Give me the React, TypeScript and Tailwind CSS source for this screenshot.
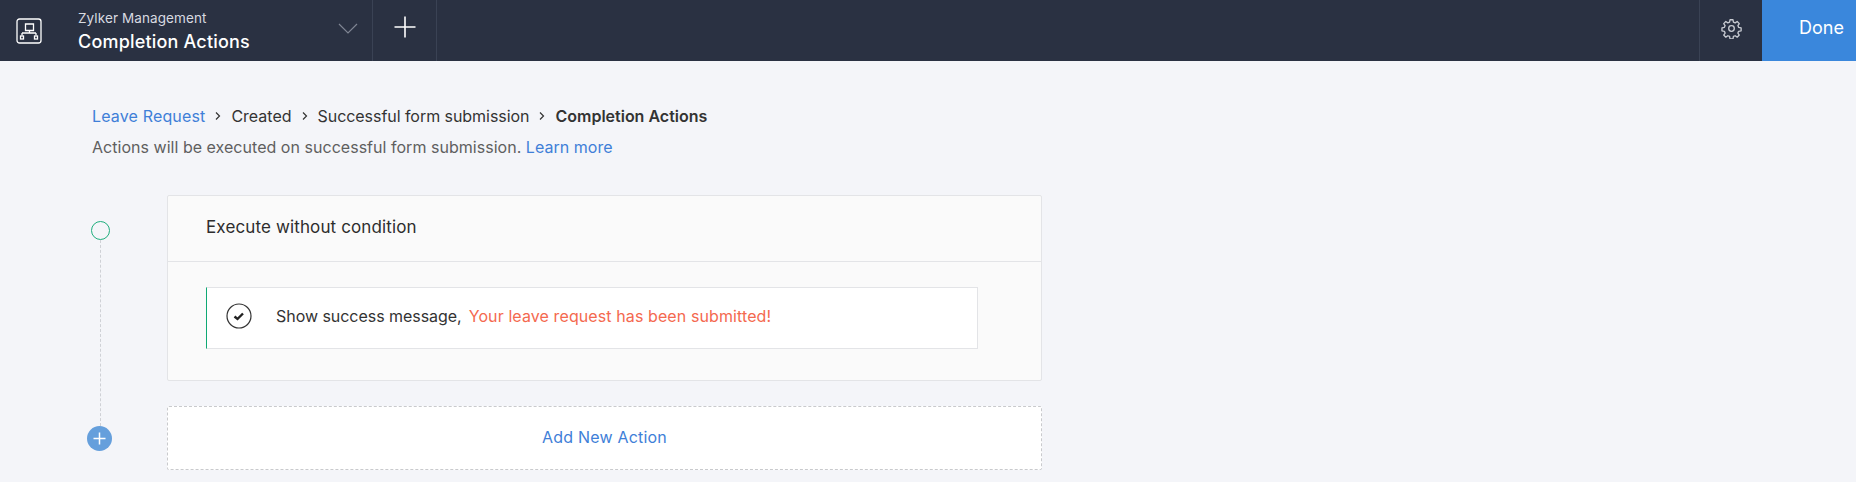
const font = "font-['Inter','Liberation_Sans',sans-serif]";

function Chevron() {
  return (
    <svg width="8" height="12" viewBox="0 0 8 12" className="mx-[9px] shrink-0" fill="none" stroke="#333" strokeWidth="1.2">
      <path d="M2 2.5 L5.5 6 L2 9.5" />
    </svg>
  );
}

export default function App() {
  return (
    <div className={`${font} h-[482px] w-[1856px] overflow-hidden bg-[#f4f5f9]`}>
      <header className="flex h-[61px] items-stretch bg-[#2a3142]">
        <div className="flex w-[57px] shrink-0 items-center justify-center">
          <svg width="26" height="26" viewBox="0 0 26 26" fill="none" stroke="#fff" strokeWidth="1.3">
            <rect x="1" y="1" width="24" height="24" rx="2.5" />
            <path d="M9.5 6h8v6.5h-8z" />
            <path d="M6 15h14M13.5 12.5v2.5M6 15v2.5M20 15v2.5" />
            <rect x="4.5" y="18" width="3" height="3" />
            <rect x="18.5" y="18" width="3" height="3" />
          </svg>
        </div>
        <div className="flex w-[316px] shrink-0 items-center justify-between border-r border-[#3a4254] pr-[14px] pl-[21px]">
          <div className="flex flex-col pt-[7px]">
            <span className="text-[13.5px] leading-[16px] tracking-[0.1px] text-[#d8dae0]">Zylker Management</span>
            <span className="text-[18px] leading-[32px] font-medium tracking-[0.19px] text-white">Completion Actions</span>
          </div>
          <svg width="20" height="11" viewBox="0 0 20 11" fill="none" stroke="#7f8593" strokeWidth="1.2" className="mb-[5px]">
            <path d="M1 1 L10 10 L19 1" />
          </svg>
        </div>
        <div className="flex w-[64px] shrink-0 items-center justify-center border-r border-[#3a4254] pb-[8px]">
          <svg width="22" height="22" viewBox="0 0 22 22" stroke="#fff" strokeWidth="1.6">
            <path d="M11 0.5v21M0.5 11h21" />
          </svg>
        </div>
        <div className="flex-1" />
        <div className="flex w-[63px] shrink-0 items-center justify-center border-l border-[#3a4254] pb-[4px]">
          <svg width="21" height="21" viewBox="0 0 24 24" fill="none" stroke="#c9ccd3" strokeWidth="1.5" strokeLinejoin="round">
            <path d="M10.3 2h3.4l.5 2.8 2 .8 2.3-1.6 2.4 2.4-1.6 2.3.8 2 2.9.6v3.4l-2.9.5-.8 2 1.6 2.3-2.4 2.4-2.3-1.6-2 .8-.5 2.9h-3.4l-.5-2.9-2-.8-2.3 1.6-2.4-2.4 1.6-2.3-.8-2-2.8-.5v-3.4l2.8-.6.8-2-1.6-2.3 2.4-2.4 2.3 1.6 2-.8z" />
            <circle cx="12" cy="12" r="3.2" />
          </svg>
        </div>
        <button className="flex w-[94px] shrink-0 items-center justify-start bg-[#3a87dc] pb-[6px] pl-[37px] text-[18px] text-white">Done</button>
      </header>

      <main className="pl-[92px]">
        <nav className="mt-[45px] flex h-[20px] items-center text-[16px] text-[#333]">
          <span className="tracking-[0.15px] text-[#3f7fd8]">Leave Request</span>
          <Chevron />
          <span>Created</span>
          <Chevron />
          <span className="tracking-[-0.05px]">Successful form submission</span>
          <Chevron />
          <span className="font-semibold">Completion Actions</span>
        </nav>
        <p className="mt-[11px] h-[20px] text-[16px] leading-[20px] tracking-[0.03px] text-[#5f5f5f]">
          Actions will be executed on successful form submission. <span className="text-[#3f7fd8]">Learn more</span>
        </p>

        <div className="mt-[38px] flex">
          <div className="flex w-[75px] shrink-0 flex-col items-start pt-[26px]">
            <div className="ml-[-1px] h-[19px] w-[19px] shrink-0 rounded-full border border-[#1fae7d]" />
            <div className="ml-[8px] h-[186px] border-l border-dashed border-[#cfd1d6]" />
            <div className="ml-[-5px] flex h-[25px] w-[25px] shrink-0 items-center justify-center rounded-full bg-[#659fdc]">
              <svg width="13" height="13" viewBox="0 0 13 13" stroke="#fff" strokeWidth="1.5">
                <path d="M6.5 0.5v12M0.5 6.5h12" />
              </svg>
            </div>
          </div>

          <div className="w-[875px] shrink-0">
            <section className="h-[186px] rounded-[2px] border border-[#e3e4e7] bg-[#fafafa]">
              <div className="flex h-[66px] items-center border-b border-[#e3e4e7] pb-[2px] pl-[38px] text-[17px] tracking-[0.13px] text-[#2d2d2d]">
                Execute without condition
              </div>
              <div className="pt-[25px] pl-[38px]">
                <div className="flex h-[62px] w-[772px] items-center border border-[#e3e4e7] border-l-[#0fa974] bg-white pb-[4px] pl-[19px] text-[16px]">
                  <svg width="26" height="26" viewBox="0 0 26 26" fill="none" className="shrink-0">
                    <circle cx="13" cy="13" r="12" stroke="#333" strokeWidth="1.2" />
                    <path d="M8.5 13.5 L11.5 16 L17 10.5" stroke="#222" strokeWidth="2.4" />
                  </svg>
                  <span className="ml-[24px] tracking-[-0.04px] text-[#333]">Show success message,</span>
                  <span className="ml-[7px] tracking-[0.1px] text-[#f4694f]">Your leave request has been submitted!</span>
                </div>
              </div>
            </section>
            <div className="mt-[25px] flex h-[64px] items-center justify-center rounded-[2px] border border-dashed border-[#c9cacd] bg-white pb-[2px] text-[16px] tracking-[0.2px] text-[#3f7fd8]">
              Add New Action
            </div>
          </div>
        </div>
      </main>
    </div>
  );
}
